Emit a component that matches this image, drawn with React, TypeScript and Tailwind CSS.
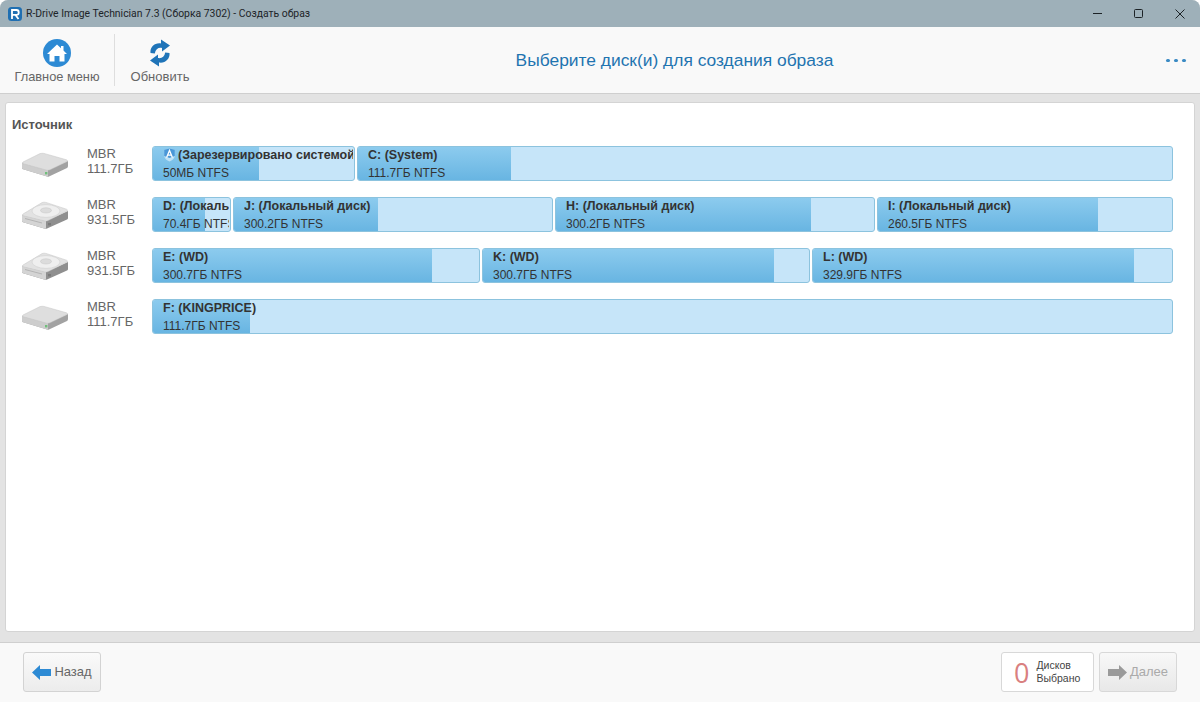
const F = '[font-family:"Liberation_Sans",Arial,sans-serif]';

type Part = { label: string; size: string; width: number; fill: number; icon?: boolean };

const rows: { type: 'ssd' | 'hdd'; cap: string; parts: Part[] }[] = [
  { type: 'ssd', cap: '111.7ГБ', parts: [
    { label: '(Зарезервировано системой)', size: '50МБ NTFS', width: 203, fill: 106, icon: true },
    { label: 'C: (System)', size: '111.7ГБ NTFS', width: 816, fill: 153 },
  ] },
  { type: 'hdd', cap: '931.5ГБ', parts: [
    { label: 'D: (Локальный диск)', size: '70.4ГБ NTFS', width: 79, fill: 52 },
    { label: 'J: (Локальный диск)', size: '300.2ГБ NTFS', width: 320, fill: 144 },
    { label: 'H: (Локальный диск)', size: '300.2ГБ NTFS', width: 320, fill: 255 },
    { label: 'I: (Локальный диск)', size: '260.5ГБ NTFS', width: 296, fill: 220 },
  ] },
  { type: 'hdd', cap: '931.5ГБ', parts: [
    { label: 'E: (WD)', size: '300.7ГБ NTFS', width: 328, fill: 279 },
    { label: 'K: (WD)', size: '300.7ГБ NTFS', width: 328, fill: 291 },
    { label: 'L: (WD)', size: '329.9ГБ NTFS', width: 361, fill: 321 },
  ] },
  { type: 'ssd', cap: '111.7ГБ', parts: [
    { label: 'F: (KINGPRICE)', size: '111.7ГБ NTFS', width: 1021, fill: 97 },
  ] },
];

function Drive({ type }: { type: 'ssd' | 'hdd' }) {
  if (type === 'ssd') {
    return (
      <svg width="48" height="30" viewBox="0 0 48 30">
        <path d="M1 14 L1 19 Q1 20 3 20.6 L26 27.6 Q27 28 28 27.5 L46 19 Q47 18.5 47 17 L47 12 L27 21 Z" fill="#a2a2a2" />
        <path d="M1 14 L1 19 Q1 20 3 20.6 L26 27.6 Q27 28 27 27 L27 21 Z" fill="#cdcdcd" />
        <path d="M2 13 L19 4.6 Q21 4 23 4.4 L45.5 10.8 Q47.5 11.6 46 12.5 L29 20.8 Q27 21.6 25 21 L2.5 14.8 Q0.5 14 2 13 Z" fill="#dedede" stroke="#c4c4c4" strokeWidth="0.5" />
        <rect x="24" y="23" width="2.4" height="2.4" fill="#6fbf7a" />
      </svg>
    );
  }
  return (
    <svg width="48" height="30" viewBox="0 0 48 30">
      <path d="M1 15 L1 21 Q1 22 3 22.6 L24 28.8 Q25 29 26 28.6 L46 19.5 Q47 19 47 18 L47 11 L25 21 Z" fill="#8f8f8f" />
      <path d="M1 15 L1 21 Q1 22 3 22.6 L24 28.8 Q25 29 25 28 L25 21 Z" fill="#d4d4d4" />
      <path d="M2 14 L21 2.6 Q23 1.8 25 2.4 L45.5 9.2 Q47.5 10 46 11 L27 20.6 Q25 21.4 23 20.8 L2.5 15.8 Q0.5 15 2 14 Z" fill="#e2e2e2" stroke="#c6c6c6" strokeWidth="0.5" />
      <ellipse cx="25" cy="11" rx="14" ry="6.4" fill="#efefef" stroke="#cfcfcf" strokeWidth="0.6" />
      <ellipse cx="25" cy="10.4" rx="5.5" ry="2.6" fill="#dcdcdc" stroke="#c4c4c4" strokeWidth="0.5" />
      <rect x="27" y="23" width="3" height="2.4" fill="#7a7a7a" />
      <path d="M4 18.5 L21 23" stroke="#b4b4b4" strokeWidth="1" />
    </svg>
  );
}

function Partition({ p }: { p: Part }) {
  return (
    <div style={{ width: p.width }} className="relative h-[35px] shrink-0 overflow-hidden rounded-[3px] border border-[#8cc3de] bg-[#c6e5f9]">
      <div style={{ width: p.fill }} className="absolute inset-y-0 left-0 bg-gradient-to-b from-[#8ccbee] to-[#68b5e2]" />
      <div className="relative flex h-full flex-col pl-[10px] pr-[1px] pt-[1px] text-[12px] leading-[14px] text-[#333]">
        <div className="flex items-center overflow-hidden whitespace-nowrap text-[12.5px] font-bold">
          {p.icon && (
            <svg width="13" height="14" viewBox="0 0 13 14" className="mr-[2px] shrink-0">
              <path d="M6.5 0.5 L11.8 1.8 V7.5 C11.8 10.5 9 12.6 6.5 13.5 C4 12.6 1.2 10.5 1.2 7.5 V1.8 Z" fill="#bfe2f5" />
              <path d="M1.2 1.8 L6.5 0.5 L11.8 1.8 V8 L6.5 10 L1.2 8 Z" fill="#4a98d8" />
              <path d="M3.6 9.5 L6.5 2.4 L9.4 9.5 M4.7 7.2 H8.3" fill="none" stroke="#fff" strokeWidth="1.3" />
            </svg>
          )}
          {p.label}
        </div>
        <div className="mt-[4px] overflow-hidden whitespace-nowrap">{p.size}</div>
      </div>
    </div>
  );
}

export default function App() {
  return (
    <div className={`${F} flex h-[702px] w-[1200px] flex-col overflow-hidden rounded-t-[8px] bg-[#e3e3e3]`}>
      <div className="flex h-[27px] shrink-0 items-center bg-[#9eb0b9] pl-[8px]">
        <svg width="14" height="14" viewBox="0 0 14 14" className="mr-[4px]">
          <rect width="14" height="14" rx="3.5" fill="#1f6fb2" />
          <path d="M4 12 V3 H8.5 C11.5 3 11.5 7.8 8.5 7.8 H4 M7.5 8 L10.5 12" fill="none" stroke="#fff" strokeWidth="1.8" />
        </svg>
        <span className="text-[10.4px] text-[#1d2428] [font-family:'Roboto',sans-serif]">R-Drive Image Technician 7.3 (Сборка 7302) - Создать образ</span>
        <div className="ml-auto flex items-center">
          <div className="flex h-[27px] w-[41px] items-center justify-center">
            <div className="h-px w-[9px] bg-[#1c2226]" />
          </div>
          <div className="flex h-[27px] w-[41px] items-center justify-center">
            <div className="h-[9px] w-[9px] rounded-[1.5px] border border-[#1c2226]" />
          </div>
          <div className="flex h-[27px] w-[41px] items-center justify-center">
            <svg width="10" height="10" viewBox="0 0 10 10"><path d="M0.5 0.5 L9.5 9.5 M9.5 0.5 L0.5 9.5" stroke="#1c2226" strokeWidth="1" /></svg>
          </div>
        </div>
      </div>

      <div className="flex h-[67px] shrink-0 items-stretch border-b border-[#cfcfcf] bg-[#f9f9f9]">
        <div className="flex w-[114px] flex-col items-center pt-[12px]">
          <svg width="28" height="28" viewBox="0 0 28 28">
            <circle cx="14" cy="14" r="14" fill="#2d8ad4" />
            <path d="M14 5.5 L18 9.2 V7 H20.5 V11.5 L24 15 H21.5 V22.5 H16.5 V17 H11.5 V22.5 H6.5 V15 H4 Z" fill="#fff" />
          </svg>
          <span className="mt-[2px] whitespace-nowrap text-[12.8px] leading-[16px] text-[#666]">Главное меню</span>
        </div>
        <div className="my-[7px] w-px bg-[#dedede]" />
        <div className="flex w-[90px] flex-col items-center pt-[12px]">
          <svg width="28" height="28" viewBox="0 0 28 28">
            <path d="M4.5 14 C3.8 8 9 3.5 15 4.5 L15 0.5 L24 6.5 L16 12.5 L16 9 C12.5 8.3 9.5 10 8.8 14.5 Z" fill="#1f74b8" />
            <path d="M23.5 14 C24.2 20 19 24.5 13 23.5 L13 27.5 L4 21.5 L12 15.5 L12 19 C15.5 19.7 18.5 18 19.2 13.5 Z" fill="#1f74b8" />
          </svg>
          <span className="mt-[2px] whitespace-nowrap text-[13px] leading-[16px] text-[#666]">Обновить</span>
        </div>
        <div className="flex flex-1 items-center justify-center pr-[14px] pt-[1px]">
          <span className="text-[17.4px] text-[#1f74b0]">Выберите диск(и) для создания образа</span>
        </div>
        <div className="flex w-[42px] items-center gap-[4.5px] pl-[8px] pt-[1px]">
          <span className="h-[3.5px] w-[3.5px] rounded-full bg-[#3b8bc4]" />
          <span className="h-[3.5px] w-[3.5px] rounded-full bg-[#3b8bc4]" />
          <span className="h-[3.5px] w-[3.5px] rounded-full bg-[#3b8bc4]" />
        </div>
      </div>

      <div className="flex min-h-0 flex-1 flex-col px-[5px] pb-[10px] pt-[8px]">
        <div className="flex-1 rounded-[3px] border border-[#d4d4d4] bg-white pl-[6px] pt-[14px]">
          <div className="text-[13px] font-bold leading-[15px] text-[#555]">Источник</div>
          <div className="mt-[14px] flex flex-col gap-[16px]">
            {rows.map((r, i) => (
              <div key={i} className="flex h-[35px] items-center">
                <div className="flex w-[66px] shrink-0 justify-center">
                  <Drive type={r.type} />
                </div>
                <div className="ml-[9px] w-[65px] -translate-y-[3px] shrink-0 text-[13px] leading-[15px] text-[#666]">
                  <div>MBR</div>
                  <div>{r.cap}</div>
                </div>
                <div className="flex gap-[2px]">
                  {r.parts.map((p, j) => <Partition key={j} p={p} />)}
                </div>
              </div>
            ))}
          </div>
        </div>
      </div>

      <div className="flex h-[60px] shrink-0 items-center border-t border-[#cfcfcf] bg-[#f9f9f9] px-[23px] pb-[1px]">
        <div className="flex h-[40px] w-[78px] items-center justify-center gap-[3px] rounded-[3px] border border-[#d3d3d3] bg-gradient-to-b from-[#fafafa] to-[#ececec]">
          <svg width="19" height="15" viewBox="0 0 19 15"><path d="M0 7.5 L8 0 V4 H19 V11 H8 V15 Z" fill="#2d8ad4" /></svg>
          <span className="text-[13px] text-[#666]">Назад</span>
        </div>
        <div className="ml-auto flex h-[40px] w-[93px] items-center rounded-[3px] border border-[#d8d8d8] bg-white pl-[12px]">
          <span className="text-[27px] leading-none text-[#d98080] [font-family:'Open_Sans',sans-serif]">0</span>
          <div className="ml-[7px] text-[10.5px] leading-[13px] text-[#444]">
            <div>Дисков</div>
            <div>Выбрано</div>
          </div>
        </div>
        <div className="ml-[5px] flex h-[40px] w-[78px] items-center justify-center gap-[3px] rounded-[3px] border border-[#d8d8d8] bg-gradient-to-b from-[#f8f8f8] to-[#e8e8e8]">
          <svg width="19" height="15" viewBox="0 0 19 15"><path d="M19 7.5 L11 0 V4 H0 V11 H11 V15 Z" fill="#9a9a9a" /></svg>
          <span className="text-[13px] text-[#aaa]">Далее</span>
        </div>
      </div>
    </div>
  );
}
